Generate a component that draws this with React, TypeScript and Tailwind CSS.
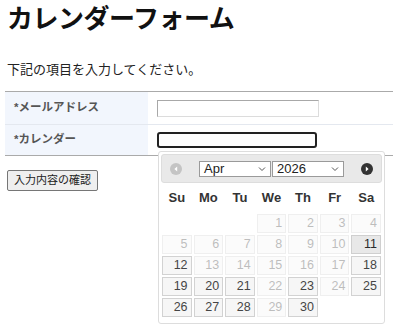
import React from "react";

const font = { fontFamily: '"Liberation Sans", "Noto Sans CJK JP", sans-serif' };

type Day = { n: number; on: boolean; hover?: boolean } | null;

const enabled = [11, 12, 18, 19, 20, 21, 23, 25, 26, 27, 28, 30];

function buildWeeks(): Day[][] {
  const cells: Day[] = [null, null, null];
  for (let d = 1; d <= 30; d++) {
    cells.push({ n: d, on: enabled.includes(d), hover: d === 11 });
  }
  while (cells.length % 7) cells.push(null);
  const weeks: Day[][] = [];
  for (let i = 0; i < cells.length; i += 7) weeks.push(cells.slice(i, i + 7));
  return weeks;
}

function Chevron() {
  return (
    <svg width="8" height="6" viewBox="0 0 8 6" fill="none" stroke="#555" strokeWidth="1">
      <path d="M1 1.5l3 3 3-3" />
    </svg>
  );
}

function FakeSelect({ value }: { value: string }) {
  return (
    <div className="flex h-[16px] w-[72px] items-center justify-between border border-[#9a9a9a] bg-white pl-[4px] pr-[4px] text-[13px] leading-none text-[#222]">
      <span>{value}</span>
      <Chevron />
    </div>
  );
}

function Datepicker() {
  const weeks = buildWeeks();
  const heads = ["Su", "Mo", "Tu", "We", "Th", "Fr", "Sa"];
  return (
    <div className="absolute left-[158px] top-[151px] w-[227px] rounded-[3px] border border-[#dddddd] bg-white p-[2px] pb-[5px]">
      {/* header */}
      <div className="flex h-[29px] items-center justify-between rounded-[3px] border border-[#dddddd] bg-[#e9e9e9] px-[8px]">
        <svg width="12" height="12" viewBox="0 0 12 12">
          <circle cx="6" cy="6" r="6" fill="#c4c4c4" />
          <path d="M7.2 3.6L4.4 6l2.8 2.4z" fill="#fff" />
        </svg>
        <div className="flex gap-[1px]">
          <FakeSelect value="Apr" />
          <FakeSelect value="2026" />
        </div>
        <svg width="12" height="12" viewBox="0 0 12 12">
          <circle cx="6" cy="6" r="6" fill="#333" />
          <path d="M4.8 3.6L7.6 6 4.8 8.4z" fill="#fff" />
        </svg>
      </div>

      <div className="mt-[2px] grid grid-cols-7">
        {heads.map((h) => (
          <div key={h} className="pb-[9px] pt-[6px] text-center text-[13px] font-bold leading-[13px] text-[#333]">
            {h}
          </div>
        ))}
      </div>

      {weeks.map((w, wi) => (
        <div key={wi} className="grid grid-cols-7">
          {w.map((d, di) => (
            <div key={di} className="p-[1px]">
              {d ? (
                <div
                  className={
                    "border px-[3px] py-[2px] text-right text-[12.5px] leading-[13px] " +
                    (d.hover
                      ? "border-[#cfcfcf] bg-[#e8e8e8] text-[#2b2b2b]"
                      : "border-[#d2d2d2] bg-[#f6f6f6] text-[#454545]") +
                    (d.on ? "" : " opacity-[0.35]")
                  }
                >
                  {d.n}
                </div>
              ) : (
                <div className="h-[19px]" />
              )}
            </div>
          ))}
        </div>
      ))}
    </div>
  );
}

export default function App() {
  return (
    <div className="relative h-[330px] w-[400px] bg-white text-[#111]" style={font}>
      <div className="px-[7px] pt-[4px]">
        <h1 className="text-[26px] font-bold leading-[31px] tracking-[-0.5px] text-[#111]">カレンダーフォーム</h1>
        <p className="mt-[26px] text-[13px] leading-[18px] text-[#222]">下記の項目を入力してください。</p>
      </div>

      <table className="ml-[5px] mt-[12px] w-[388px] border-collapse border-y border-[#aaaaaa]">
        <tbody>
          <tr className="h-[33px] border-b border-[#e4e8ef]">
            <th className="w-[143px] bg-[#f2f6fd] pl-[9px] text-left text-[11.5px] font-bold text-[#555]">*メールアドレス</th>
            <td className="pl-[9px]">
              <div className="h-[17px] w-[162px] border border-[#a8a8a8] border-r-[#dcdcdc] border-b-[#dcdcdc] bg-white" />
            </td>
          </tr>
          <tr className="h-[31px]">
            <th className="bg-[#f2f6fd] pl-[9px] text-left text-[11.5px] font-bold text-[#555]">*カレンダー</th>
            <td className="pl-[9px]">
              <div className="h-[16px] w-[160px] rounded-[3px] border-2 border-[#222] bg-white" />
            </td>
          </tr>
        </tbody>
      </table>

      <button className="ml-[7px] mt-[14px] h-[21px] rounded-[2px] border border-[#767676] bg-[#efefef] px-[6px] text-[11px] leading-none text-[#222]">
        入力内容の確認
      </button>

      <Datepicker />
    </div>
  );
}
